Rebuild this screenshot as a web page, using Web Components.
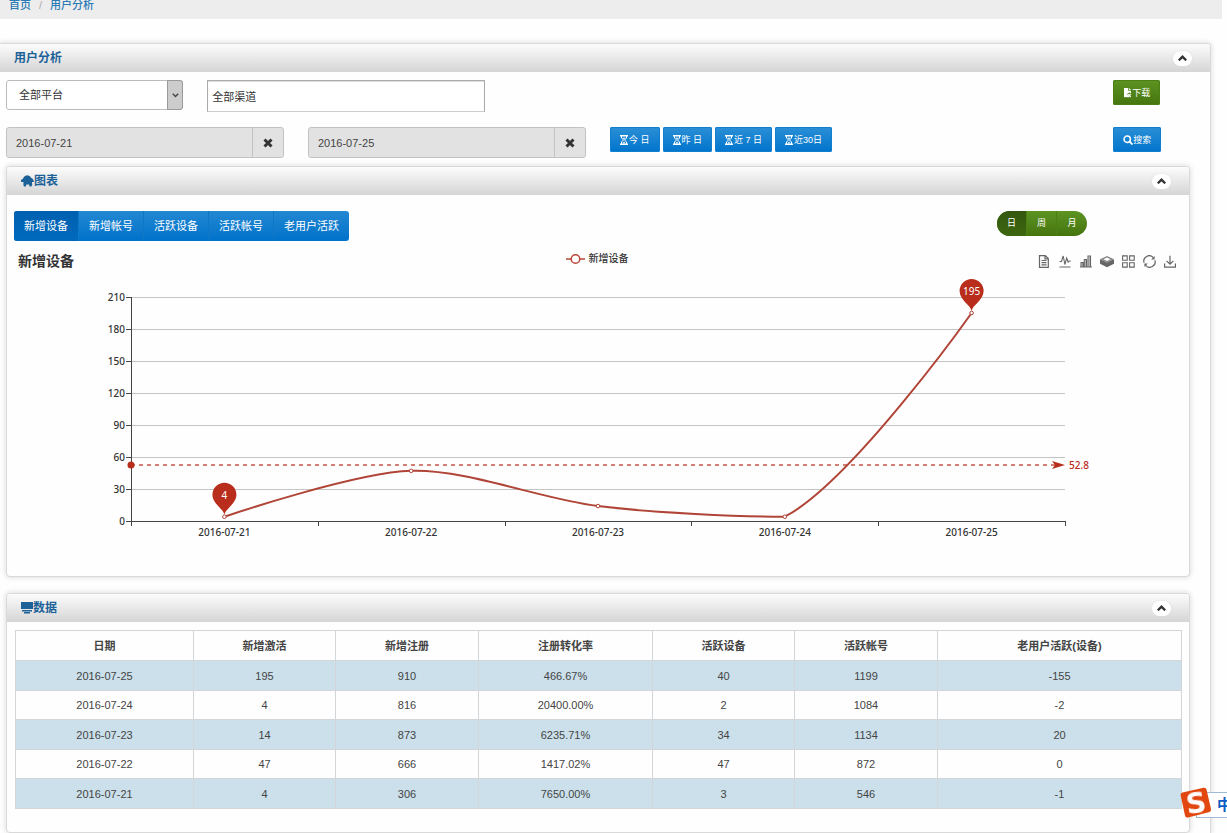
<!DOCTYPE html>
<html lang="zh-CN">
<head>
<meta charset="utf-8">
<meta name="viewport" content="width=device-width, initial-scale=1">
<title>用户分析</title>
<style>
  html { overflow: hidden auto; }
  body { margin: 0; background: #fefefe; color: #444; font: 11px/16px "Liberation Sans", "Noto Sans CJK SC", sans-serif; }
</style>
</head>
<body>
<ua-app></ua-app>
<script>
const define = (name, html, setup) => {
  const tpl = document.createElement('template');
  tpl.innerHTML = '<style>*{box-sizing:border-box}button,input,select{font:inherit;color:inherit;margin:0}</style>' + html;
  customElements.define(name, class extends HTMLElement {
    connectedCallback() {
      if (this.shadowRoot) return;
      this.attachShadow({ mode: 'open' }).append(tpl.content.cloneNode(true));
      if (setup) setup(this, this.shadowRoot);
    }
  });
};

/* Icons */
const line = 'fill="none" stroke="currentColor"';
const ICONS = {
  hourglass: [9, 10, `<path d="M0 0h8v1.4H0zM0 8.6h8V10H0z" fill="currentColor"/><path d="M1.5 1v2L3.5 5l-2 2v2M6.5 1v2L4.5 5l2 2v2" ${line}/><path d="M2.5 8.5 4 6.6l1.5 1.9zM2.6 2.8h2.8L4 4.6z" fill="currentColor"/>`],
  file: [9, 10, `<path d="M1 0h4.200v2.800H8v2.400L6.200 4.600 4 6.200 6 8 4.500 9 1 9.200z" fill="currentColor"/><path d="M6 0 8 2H6z" fill="currentColor"/><path d="M5 6.2 7.8 9M7.8 6 4.6 9.4" ${line} stroke-width="1.2"/>`],
  search: [10, 10, `<circle cx="4.2" cy="4.2" r="3.2" ${line} stroke-width="1.5"/><path d="m6.5 6.5 3 3" stroke="currentColor" stroke-width="1.8"/>`],
  home: [13, 12, `<path d="M6.500 0.300 9 1.200l1 1.600 1.400.6.9 1.400.7 2.200H11l.2 3-.9 1.500H8.600l-.6-2H5.400l-.6 2H3l-.6-1.500.1-3H.1L0 5l2-1.200.8-1.800L4.500.7z" fill="currentColor"/>`],
  monitor: [12, 12, `<path d="M0 0h12v7H0z" fill="currentColor"/><path d="M1 8h10v1.5H1zM3 10h6v1.5H3z" fill="currentColor"/>`],
  up: [9, 6, `<path d="M.8 5.3 4.5 1.7l3.700 3.600" fill="none" stroke="#333" stroke-width="2.4"/>`],
  down: [7, 5, `<path d="m.8.8 2.7 2.7L6.200.8" fill="none" stroke="#444" stroke-width="1.4"/>`],
  cross: [10, 10, `<path d="m1.5 1.5 7 7M8.5 1.5l-7 7" stroke="#333" stroke-width="3"/>`],
  doc: [12, 13, `<path d="M1.500.6h5.800l3 3v8.800H1.500zM7 .6v3.200h3.300M3.500 5.500h5M3.500 7.700h5M3.500 9.900h5" ${line} stroke-width="1.200"/>`],
  pulse: [12, 13, `<path d="M.5 6.500h2L4.200 1l1.700 8.500L7.700 3l1.500 4.200 1-1.200h1.600M.5 12h11" ${line} stroke-width="1.100"/>`],
  bars: [12, 13, `<path d="M1 12V7.500h2.200V12M4.300 12V4.500h2.200V12M8 12V1h2.500v11M0 12h12" ${line} stroke-width="1.100"/><path d="M8.500 1.500H10V12H8.500zM1.500 8H3v4H1.500zM5 5h1.400v7H5z" fill="currentColor" opacity=".5"/>`],
  stack: [14, 13, `<path d="M7 1 14 4.300 7 7.600 0 4.300z" fill="#888"/><path d="M0 4.300 7 7.600l7-3.300v4.500L7 12.200 0 8.800z" fill="currentColor"/><path d="M3.500 4.300 7 2.600l3.500 1.700L7 6z" fill="#fff"/>`],
  grid: [13, 13, `<path d="M.6.900h4.600v4.400H.6zM7.600.9h4.600v4.400H7.600zM.6 7.700h4.600v4.400H.6zM7.600 7.700h4.600v4.400H7.600z" ${line} stroke-width="1.100"/>`],
  refresh: [13, 13, `<path d="M1.100 7.800A5.400 5.400 0 0 1 10.400 2.700M11.900 5.200A5.400 5.400 0 0 1 2.600 10.300" ${line} stroke-width="1.200"/><path d="M11.600 1v3.400H8.200zM1.400 12V8.600h3.400z" fill="currentColor"/>`],
  save: [12, 13, `<path d="M6 .8v8M2.600 5.800 6 9.200l3.400-3.400M.6 8.500v3.600h10.800V8.500" ${line} stroke-width="1.200"/>`],
};
define('ua-icon', `<style>:host{display:inline-flex;flex:none}svg{display:block}</style><svg aria-hidden="true"></svg>`, (el, root) => {
  const [w, h, art] = ICONS[el.getAttribute('name')];
  const svg = root.querySelector('svg');
  svg.setAttribute('width', w); svg.setAttribute('height', h); svg.setAttribute('viewBox', `0 0 ${w} ${h}`);
  svg.innerHTML = art;
});

/* Breadcrumb */
define('ua-breadcrumb', `<style>
  :host{display:block;background:#ededed;height:19px}
  nav{display:flex;gap:8px;padding:0 9px;line-height:10px;font-weight:500}
  a{color:#2a7ab5;text-decoration:none} span{color:#aaa}
</style><nav aria-label="路径"><a href="#home">首页</a><span>/</span><a href="#users">用户分析</a></nav>`);

/* Collapsible panel */
define('ua-panel', `<style>
  :host{display:block;border:1px solid #d9d9d9;border-radius:4px;box-shadow:0 0 5px 1px #e2e2e2;background:#fefefe}
  header{display:flex;align-items:center;justify-content:space-between;height:28px;padding:0 18px 0 14px;background:linear-gradient(#fcfcfc,#d5d5d5);border-radius:3px 3px 0 0}
  h2{display:flex;align-items:center;margin:0;font-size:12px;line-height:16px;font-weight:bold;color:#1c6298}
  button{display:flex;align-items:center;justify-content:center;width:19px;height:15px;padding:0;border:0;border-radius:8px;background:#fff;box-shadow:0 0 2px #ddd}
</style>
<header><h2><slot name="icon"></slot><span></span></h2><button type="button" aria-label="收起"><ua-icon name="up"></ua-icon></button></header>
<slot></slot>`, (el, root) => { root.querySelector('span').textContent = el.getAttribute('heading'); });

/* Small button */
define('ua-button', `<style>
  :host{display:inline-flex}
  button{display:flex;align-items:center;height:25px;padding:0 10px;border:0;border-radius:2px;color:#fff;font-size:9px;line-height:12px;white-space:nowrap;background:linear-gradient(#2b8fd6,#0074cc);box-shadow:inset 0 0 0 1px #0f7fce}
  :host([tone=green]) button{background:linear-gradient(#5c9422,#46740f);box-shadow:inset 0 0 0 1px #4c8015}
</style><button type="button"><slot></slot></button>`, (el, root) => {
  const icon = document.createElement('ua-icon');
  icon.setAttribute('name', el.getAttribute('icon'));
  root.querySelector('button').prepend(icon);
});

define('ua-select', `<style>
  :host{display:grid;grid-template-columns:1fr 16px;height:30px}
  select{grid-area:1/1/2/3;appearance:none;width:100%;height:100%;padding:0 20px 0 12px;border:1px solid #bbb;border-radius:3px;background:#fff;color:#333}
  span{grid-area:1/2;display:flex;align-items:center;justify-content:center;border:1px solid #999;border-radius:0 3px 3px 0;background:#ccc;pointer-events:none;z-index:1}
</style><select aria-label="平台"><option>全部平台</option></select><span><ua-icon name="down"></ua-icon></span>`);

define('ua-channel', `<style>
  :host{display:block}
  input{display:block;width:100%;height:32px;padding:0 4px;border:1px solid #aaa;border-bottom-color:#ccc;background:#fff;color:#333;box-shadow:inset 0 1px 1px #ddd;border-radius:0}
</style><input type="text" aria-label="渠道" value="全部渠道">`);

define('ua-date', `<style>
  :host{display:flex;height:31px;border:1px solid #c2c2c2;border-radius:3px;background:#e2e2e2}
  input{flex:1;min-width:0;padding:0 9px;border:0;background:none;color:#444}
  button{display:flex;align-items:center;justify-content:center;width:31px;padding:0;border:0;border-left:1px solid #c2c2c2;background:none}
</style><input type="text" readonly><button type="button" aria-label="清除"><ua-icon name="cross"></ua-icon></button>`, (el, root) => {
  const input = root.querySelector('input');
  input.value = el.getAttribute('value');
  input.setAttribute('aria-label', el.getAttribute('label'));
});

define('ua-filters', `<style>
  :host{display:grid;grid-template-columns:repeat(12,minmax(0,1fr));column-gap:24px;row-gap:15px;align-items:start}
  .s2{grid-column:span 2}.s3{grid-column:span 3}.last{grid-column:12;justify-self:start}
  .quick{grid-column:span 5;display:flex;gap:3px}
</style>
<ua-select class="s2"></ua-select><ua-channel class="s3"></ua-channel>
<ua-button class="last" tone="green" icon="file">下载</ua-button>
<ua-date class="s3" label="开始日期" value="2016-07-21"></ua-date>
<ua-date class="s3" label="结束日期" value="2016-07-25"></ua-date>
<div class="quick"><ua-button icon="hourglass">今 日</ua-button><ua-button icon="hourglass">昨 日</ua-button><ua-button icon="hourglass">近 7 日</ua-button><ua-button icon="hourglass">近30日</ua-button></div>
<ua-button class="last" icon="search">搜索</ua-button>`);

/* Segmented choices */
define('ua-segments', `<style>
  :host{display:inline-flex}
  div{display:flex;overflow:hidden;border-radius:3px;background:linear-gradient(#2388d2,#0072ca)}
  button{height:30px;padding:0 10px;border:0;border-right:1px solid #0f78c6;background:none;color:#fff;white-space:nowrap}
  button:last-child{border-right:0}
  button[aria-pressed=true]{background:linear-gradient(#0060b0,#006abc)}
  :host([tone=green]) div{border-radius:13px;background:linear-gradient(#5c9422,#46740f)}
  :host([tone=green]) button{width:30px;height:25px;padding:0 0 2px;font-size:9px;border-color:#4c8015}
  :host([tone=green]) button[aria-pressed=true]{background:linear-gradient(#33570f,#3d670f)}
</style><div role="group"></div>`, (el, root) => {
  const group = root.querySelector('div');
  el.getAttribute('items').split(',').forEach((label, i) => {
    const b = document.createElement('button');
    b.type = 'button'; b.textContent = label; b.setAttribute('aria-pressed', i === 0);
    group.append(b);
  });
});

/* Chart */
define('ua-line-chart', `<style>
  :host{display:block}
  header{display:grid;grid-template-columns:1fr auto 1fr;align-items:center;height:26px;padding:2px 6px 0 4px}
  h3{margin:0;font-size:14px;line-height:20px;color:#333}
  .legend{display:flex;align-items:center;gap:4px;font-size:10px;line-height:16px;font-weight:500;color:#333;padding-bottom:4px}
  .tools{display:flex;gap:9px;justify-content:flex-end;color:#666}
  .tools button{display:flex;align-items:center;justify-content:center;width:12px;height:13px;padding:0;border:0;background:none;color:inherit}
  #plot{display:block;width:100%;height:274px;font-family:"Noto Sans","Noto Sans CJK SC",sans-serif;font-size:10px;font-weight:500}
</style>
<header><h3>新增设备</h3>
<div class="legend"><svg width="19" height="12" viewBox="0 0 19 12" fill="none" stroke="#b8483a" stroke-width="1.5"><path d="M0 6h5M14 6h5"/><circle cx="9.5" cy="6" r="4.3"/></svg><span>新增设备</span></div>
<div class="tools"></div></header>
<svg id="plot" role="img" aria-label="新增设备"></svg>`, (el, root) => {
  const tools = { doc: '数据视图', pulse: '折线图', bars: '柱形图', stack: '堆积', grid: '平铺', refresh: '还原', save: '保存' };
  root.querySelector('.tools').innerHTML = Object.entries(tools).map(([n, l]) => `<button type="button" aria-label="${l}"><ua-icon name="${n}"></ua-icon></button>`).join('');
  const days = ['2016-07-21', '2016-07-22', '2016-07-23', '2016-07-24', '2016-07-25'];
  const values = [4, 47, 14, 4, 195];
  const svg = root.getElementById('plot');
  const draw = () => {
    const W = el.clientWidth, x0 = Math.round(W / 10), x1 = W - x0, top = 24, step = 32, base = top + 7 * step;
    const band = (x1 - x0) / 5, Y = v => base - v * step / 30;
    const pts = values.map((v, i) => [x0 + band * (i + .5), Y(v)]);
    let out = '';
    for (let i = 0; i <= 7; i++) {
      const y = base - i * step;
      out += `<path d="M${x0} ${y + .5}H${x1}" stroke="#c4c4c4"/><path d="M${x0 - 5} ${y + .5}h5" stroke="#444"/><text x="${x0 - 6}" y="${y + 4}" text-anchor="end" fill="#333">${i * 30}</text>`;
    }
    out += `<path d="M${x0 + .5} ${top}V${base + 5}M${x0} ${base + .5}H${x1}" stroke="#444" fill="none"/>`;
    for (let i = 1; i <= 5; i++) out += `<path d="M${Math.round(x0 + i * band) + .5} ${base}v5" stroke="#444"/>`;
    days.forEach((d, i) => { out += `<text x="${pts[i][0]}" y="${base + 15}" text-anchor="middle" fill="#333">${d}</text>`; });
    // Smooth control points, held inside the range of the data.
    const lo = Math.min(...pts.map(p => p[1])), hi = Math.max(...pts.map(p => p[1]));
    const clamp = y => Math.max(lo, Math.min(hi, y));
    const cps = pts.map((p, i) => {
      if (!i || i === pts.length - 1) return [p, p];
      const a = pts[i - 1], b = pts[i + 1], v = [(b[0] - a[0]) * .3, (b[1] - a[1]) * .3];
      const d0 = Math.hypot(p[0] - a[0], p[1] - a[1]), d1 = Math.hypot(p[0] - b[0], p[1] - b[1]), s = d0 + d1;
      return [[p[0] - v[0] * d0 / s, clamp(p[1] - v[1] * d0 / s)], [p[0] + v[0] * d1 / s, clamp(p[1] + v[1] * d1 / s)]];
    });
    let d = `M${pts[0]}`;
    for (let i = 1; i < pts.length; i++) d += `C${cps[i - 1][1]} ${cps[i][0]} ${pts[i]}`;
    const avg = Math.round(Y(52.8));
    out += `<path d="M${x0} ${avg}H${x1 - 10}" stroke="#c4574a" stroke-width="1.400" stroke-dasharray="4 4"/><circle cx="${x0}" cy="${avg}" r="3.500" fill="#b92d1c"/>`
      + `<path d="M${x1} ${avg}l-13-4 3 4-3 4z" fill="#b92d1c"/><text x="${x1 + 4}" y="${avg + 4}" fill="#b92d1c">52.8</text>`
      + `<path d="${d}" fill="none" stroke="#b04537" stroke-width="2"/>`;
    pts.forEach(p => { out += `<circle cx="${p[0]}" cy="${p[1]}" r="1.800" fill="#fff" stroke="#b04537"/>`; });
    [0, 4].forEach(i => {
      const [x, y] = pts[i];
      out += `<path d="M${x} ${y - 2}c-1-6-12-11-12-20a12 12 0 0 1 24 0c0 9-11 14-12 20z" fill="#b92d1c"/><text x="${x}" y="${y - 18}" text-anchor="middle" fill="#fff" font-weight="400">${values[i]}</text>`;
    });
    svg.innerHTML = out;
  };
  draw();
  addEventListener('resize', draw);
});

/* Data table */
define('ua-table', `<style>
  :host{display:block}
  table{width:100%;table-layout:fixed;border-collapse:collapse;text-align:center}
  th,td{padding:0;border:1px solid #d2d6d8;line-height:16px}
  th{color:#444;font-weight:bold}
  tr{height:30px}
  tbody tr:nth-child(odd){background:#cbe0eb}
  tbody tr:nth-child(even){height:29px}
</style><table><colgroup></colgroup><thead><tr></tr></thead><tbody></tbody></table>`, (el, root) => {
  const cols = [['日期', 178], ['新增激活', 142], ['新增注册', 143], ['注册转化率', 174], ['活跃设备', 142], ['活跃帐号', 143], ['老用户活跃(设备)', 244]];
  const rows = [
    ['2016-07-25', '195', '910', '466.67%', '40', '1199', '-155'],
    ['2016-07-24', '4', '816', '20400.00%', '2', '1084', '-2'],
    ['2016-07-23', '14', '873', '6235.71%', '34', '1134', '20'],
    ['2016-07-22', '47', '666', '1417.02%', '47', '872', '0'],
    ['2016-07-21', '4', '306', '7650.00%', '3', '546', '-1'],
  ];
  root.querySelector('colgroup').innerHTML = cols.map(c => `<col style="width:${c[1]}px">`).join('');
  root.querySelector('thead tr').innerHTML = cols.map(c => `<th scope="col">${c[0]}</th>`).join('');
  root.querySelector('tbody').innerHTML = rows.map(r => `<tr>${r.map(v => `<td>${v}</td>`).join('')}</tr>`).join('');
});

/* Floating input-method bar */
define('ua-ime', `<style>
  :host{position:fixed;right:0;bottom:14px;display:block;width:47px;height:32px;overflow:hidden}
  .bar{position:absolute;left:16px;right:-20px;top:5px;height:26px;border:1px solid #9db9d6;background:#fff;padding-left:20px;color:#0b5cc4;font-size:15px;line-height:24px;font-weight:bold;white-space:nowrap}
  svg{position:absolute;left:0;top:0}
</style><div class="bar">中</div>
<svg width="32" height="32" viewBox="0 0 32 32"><path d="M2.500 5.500Q.3 6 .600 8L5 28.500Q5.500 31.200 8 30.500L29.500 25Q31.500 24 31 22L26.500 2.500Q26 .3 23.500.8z" fill="#e2470f"/><text x="16" y="26" text-anchor="middle" font-family="DejaVu Sans, sans-serif" font-weight="bold" font-size="28" fill="#fff" transform="rotate(-8 16 16)">S</text></svg>`);

define('ua-app', `<style>
  :host{display:flex;flex-direction:column;min-height:100vh}
  ua-breadcrumb{margin-right:5px}
  .outer{flex:1;margin:24px 16px 0 0;border-left:0;border-bottom:0;border-radius:0 4px 0 0}
  .content{display:flex;flex-direction:column;padding:8px 20px 0 6px}
  .chart{margin-top:8px}
  .data{margin-top:16px}
  .controls{display:flex;justify-content:space-between;align-items:flex-start;padding:16px 102px 6px 7px}
  ua-line-chart{margin:0 7px 29px}
  ua-table{margin:8px 8px 23px}
</style>
<ua-breadcrumb></ua-breadcrumb>
<ua-panel class="outer" heading="用户分析"><div class="content">
  <ua-filters></ua-filters>
  <ua-panel class="chart" heading="图表"><ua-icon slot="icon" name="home"></ua-icon>
    <div class="controls"><ua-segments items="新增设备,新增帐号,活跃设备,活跃帐号,老用户活跃"></ua-segments><ua-segments tone="green" items="日,周,月"></ua-segments></div>
    <ua-line-chart></ua-line-chart>
  </ua-panel>
  <ua-panel class="data" heading="数据"><ua-icon slot="icon" name="monitor"></ua-icon><ua-table></ua-table></ua-panel>
</div></ua-panel>
<ua-ime></ua-ime>`);
</script>
</body>
</html>
